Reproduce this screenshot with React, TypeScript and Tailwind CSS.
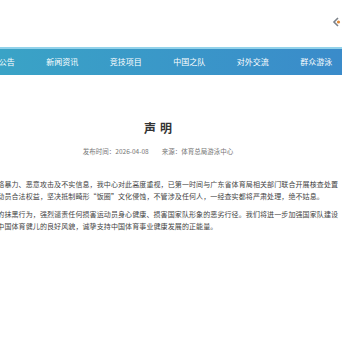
const navItems = ["通知公告", "新闻资讯", "竞技项目", "中国之队", "对外交流", "群众游泳"];

const paragraphs = [
  [
    "针对网络暴力、恶意攻击及不实信息，我中心对此高度重视，已第一时间与广东省体育局相关部门联合开展核查处置",
    "维护运动员合法权益，坚决抵制畸形“饭圈”文化侵蚀，不管涉及任何人，一经查实都将严肃处理，绝不姑息。",
  ],
  [
    "网络上的抹黑行为，强烈谴责任何损害运动员身心健康、损害国家队形象的恶劣行径。我们将进一步加强国家队建设",
    "展现出中国体育健儿的良好风貌，诚挚支持中国体育事业健康发展的正能量。",
  ],
];

function Logo() {
  return (
    <svg width="9" height="10" viewBox="0 0 9 10">
      <path d="M6 1 L2 5 L6 9" fill="none" stroke="#7a8088" strokeWidth="1.6" />
      <circle cx="6.5" cy="5" r="1.6" fill="#e08a3a" />
    </svg>
  );
}

export default function App() {
  return (
    <div
      className="w-[342px] h-[342px] overflow-hidden bg-white"
      style={{ fontFamily: '"Noto Sans CJK SC", "Noto Sans", sans-serif' }}
    >
      <header className="h-[47px] flex justify-end pt-[17px] pr-[1px]">
        <Logo />
      </header>

      <nav className="h-[28px] border-t-2 border-[#92d2ea] bg-gradient-to-r from-[#3aa3c6] to-[#3a8bca] flex items-center overflow-hidden">
        <div className="flex -ml-[33px] shrink-0">
          {navItems.map((item) => (
            <span
              key={item}
              className="w-[63.5px] shrink-0 text-center text-white text-[8px] leading-[10px]"
            >
              {item}
            </span>
          ))}
        </div>
      </nav>

      <main className="-ml-[24px] w-[364px]">
        <h1 className="mt-[47px] text-center text-[12px] leading-[12px] font-bold text-[#333] tracking-[4px] pl-[4px]">
          声明
        </h1>
        <div className="mt-[13px] flex justify-center gap-[13px] text-[6.5px] leading-[8px] text-[#777]">
          <span>发布时间：2026-04-08</span>
          <span>来源：体育总局游泳中心</span>
        </div>
        <div className="mt-[23px] flex flex-col gap-[6px] text-[7px] leading-[12px] text-[#444] tracking-[0.1px]">
          {paragraphs.map((lines, i) => (
            <p key={i}>
              {lines.map((line) => (
                <span key={line} className="block whitespace-nowrap">
                  {line}
                </span>
              ))}
            </p>
          ))}
        </div>
      </main>
    </div>
  );
}
